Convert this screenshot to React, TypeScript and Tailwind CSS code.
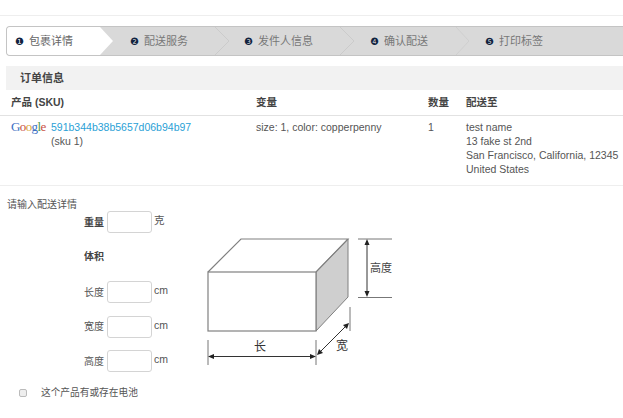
const font = { sans: 'font-["Liberation_Sans","Noto_Sans_CJK_SC",sans-serif]' };

const steps = [
  { num: '❶', label: '包裹详情', width: 'w-[115px]', text: 'text-[#666]' },
  { num: '❷', label: '配送服务', width: 'w-[114px]', text: 'text-[#777]' },
  { num: '❸', label: '发件人信息', width: 'w-[126px]', text: 'text-[#777]' },
  { num: '❹', label: '确认配送', width: 'w-[115px]', text: 'text-[#777]' },
  { num: '❺', label: '打印标签', width: 'w-[138px]', text: 'text-[#777]' },
];

function StepBar() {
  return (
    <div className="relative mt-[10px] ml-[6px] h-[30px] w-[617px] overflow-hidden rounded-l-[4px] border-y border-l border-[#c4c4c4] bg-[#d9d9d9]">
      <svg className="absolute left-0 top-0" width="617" height="28" viewBox="0 0 617 28">
        <path d="M0 0H93L106 14L93 28H0Z" fill="#fff" />
        <path d="M208 0L222 14L208 28" fill="none" stroke="#cbcbcb" />
        <path d="M333 0L347 14L333 28" fill="none" stroke="#cbcbcb" />
        <path d="M449 0L462 14L449 28" fill="none" stroke="#cfcfcf" />
      </svg>
      <div className="relative flex h-full items-center">
        {steps.map((s) => (
          <div key={s.label} className={`flex shrink-0 items-center gap-[5px] pl-[8px] text-[11px] ${s.width} ${s.text}`}>
            <span className='font-["DejaVu_Sans"] text-[10px] text-[#10233f]'>{s.num}</span>
            <span>{s.label}</span>
          </div>
        ))}
      </div>
    </div>
  );
}

function OrderTable() {
  return (
    <div>
      <div className="mt-[10px] ml-[6px] flex h-[24px] items-center bg-[#f2f2f2] pl-[14px] text-[11px] font-bold text-[#444]">
        订单信息
      </div>
      <div className="flex h-[26px] items-center border-b border-[#e2e2e2] text-[10.5px] font-bold text-[#444]">
        <div className="w-[256px] shrink-0 pl-[11px]">产品 (SKU)</div>
        <div className="w-[172px] shrink-0">变量</div>
        <div className="w-[38px] shrink-0">数量</div>
        <div>配送至</div>
      </div>
      <div className="flex h-[70px] border-b border-[#eeeeee] pt-[4px] text-[10.5px] leading-[14px] text-[#555]">
        <div className="flex w-[256px] shrink-0 pl-[11px]">
          <div className='w-[40px] font-["Liberation_Serif",serif] text-[13px] leading-[13px] tracking-[-0.6px]'>
            <span className="text-[#3b6fc4]">G</span>
            <span className="text-[#c9503f]">o</span>
            <span className="text-[#d9a531]">o</span>
            <span className="text-[#3b6fc4]">g</span>
            <span className="text-[#4c9a4f]">l</span>
            <span className="text-[#c9503f]">e</span>
          </div>
          <div>
            <div className="text-[#2a9fd6]">591b344b38b5657d06b94b97</div>
            <div>(sku 1)</div>
          </div>
        </div>
        <div className="w-[172px] shrink-0">size: 1, color: copperpenny</div>
        <div className="w-[38px] shrink-0">1</div>
        <div className="whitespace-nowrap">
          <div>test name</div>
          <div>13 fake st 2nd</div>
          <div>San Francisco, California, 12345</div>
          <div>United States</div>
        </div>
      </div>
    </div>
  );
}

function Field({ label, unit, bold }: { label: string; unit: string; bold?: boolean }) {
  return (
    <div className="flex h-[22px] items-center">
      <div className={`w-[23px] shrink-0 whitespace-nowrap text-[10px] ${bold ? 'font-bold text-[#444]' : 'text-[#555]'}`}>{label}</div>
      <div className="h-[22px] w-[45px] shrink-0 rounded-[3px] border border-[#d4d4d4] bg-white" />
      <div className="mb-[2px] ml-[2px] text-[10.5px] text-[#555]">{unit}</div>
    </div>
  );
}

function BoxDiagram() {
  return (
    <svg width="190" height="145" viewBox="0 0 190 145" className="mt-[18px] ml-[30px] shrink-0">
      <path d="M114 42L146 9V67L114 101Z" fill="#cfcfcf" stroke="#808080" />
      <path d="M6 42L39 9H146L114 42" fill="none" stroke="#808080" strokeWidth="1.2" />
      <rect x="6" y="42" width="108" height="59" fill="#fff" stroke="#808080" strokeWidth="1.2" />
      <path d="M156 9H190M156 67.5H190" stroke="#777" />
      <path d="M165 11V65" stroke="#333" />
      <path d="M165 9L162.5 15H167.5ZM165 67L162.5 61H167.5Z" fill="#222" />
      <text x="168" y="42" fontSize="11" fill="#444">高度</text>
      <path d="M6 110V135M114 110V135M148 77V101" stroke="#777" />
      <path d="M8 126.5H112" stroke="#333" />
      <path d="M6 126.5L12 124V129ZM114 126.5L108 124V129Z" fill="#222" />
      <text x="52" y="121" fontSize="12" fill="#333">长</text>
      <path d="M116 124L146 94" stroke="#333" />
      <path d="M115 125L117 119L121 123ZM147 93L145 99L141 95Z" fill="#222" />
      <text x="134" y="120" fontSize="12" fill="#333">宽</text>
    </svg>
  );
}

function ShippingForm() {
  return (
    <div className="text-[#555]">
      <div className="mt-[12px] pl-[7px] text-[10px] leading-[14px]">请输入配送详情</div>
      <div className="flex">
        <div className="ml-[84px] w-[88px] shrink-0">
          <div className="mt-[-1px]">
            <Field label="重量" unit="克" bold />
          </div>
          <div className="mt-[18px] h-[12px] text-[10px] font-bold leading-[12px] text-[#444]">体积</div>
          <div className="mt-[18px] flex flex-col gap-[12.5px]">
            <Field label="长度" unit="cm" />
            <Field label="宽度" unit="cm" />
            <Field label="高度" unit="cm" />
          </div>
        </div>
        <BoxDiagram />
      </div>
      <div className="mt-[11px] flex items-center pl-[19px]">
        <div className="h-[8px] w-[8px] rounded-[2px] border border-[#bbb] bg-[#eeeeee]" />
        <div className="ml-[14px] text-[9.7px] leading-[14px]">这个产品有或存在电池</div>
      </div>
    </div>
  );
}

export default function App() {
  return (
    <div className={`h-[418px] w-[623px] overflow-hidden bg-white ${font.sans}`}>
      <div className="h-[16px] border-b border-[#eeeeee]" />
      <StepBar />
      <OrderTable />
      <ShippingForm />
    </div>
  );
}
